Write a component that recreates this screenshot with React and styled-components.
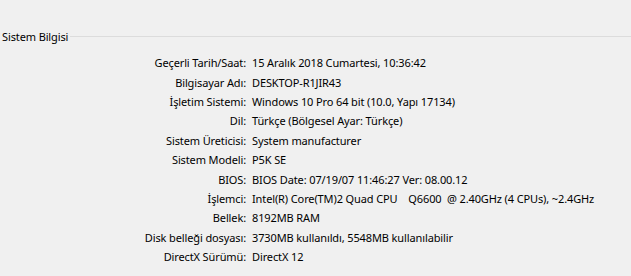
import React from 'react'
import styled, { createGlobalStyle } from 'styled-components'

const Global = createGlobalStyle`
    html, body {
        margin: 0;
        padding: 0;
        background: #f0f0f0;
    }
    body {
        font-family: "Noto Sans", "Liberation Sans", sans-serif;
        font-size: 11px;
        letter-spacing: -0.12px;
        color: #000;
    }
`

const Panel = styled.div`
    width: 631px;
    height: 276px;
    padding-top: 28px;
    box-sizing: border-box;
    overflow: hidden;
`

const Legend = styled.div`
    display: flex;
    align-items: center;
    height: 16px;
    padding-left: 2px;
    gap: 2px;

    span {
        white-space: nowrap;
    }

    &::after {
        content: '';
        flex: 1;
        height: 1px;
        background: #dcdcdc;
    }
`

const Table = styled.div`
    display: grid;
    grid-template-columns: 246px 1fr;
    column-gap: 6px;
    grid-auto-rows: 19.4px;
    margin-top: 9px;
    align-items: center;
`

const Label = styled.div`
    text-align: right;
    white-space: nowrap;
`

const Value = styled.div`
    white-space: pre;
`

const rows = [
    ['Geçerli Tarih/Saat:', '15 Aralık 2018 Cumartesi, 10:36:42'],
    ['Bilgisayar Adı:', 'DESKTOP-R1JIR43'],
    ['İşletim Sistemi:', 'Windows 10 Pro 64 bit (10.0, Yapı 17134)'],
    ['Dil:', 'Türkçe (Bölgesel Ayar: Türkçe)'],
    ['Sistem Üreticisi:', 'System manufacturer'],
    ['Sistem Modeli:', 'P5K SE'],
    ['BIOS:', 'BIOS Date: 07/19/07 11:46:27 Ver: 08.00.12'],
    ['İşlemci:', 'Intel(R) Core(TM)2 Quad CPU    Q6600  @ 2.40GHz (4 CPUs), ~2.4GHz'],
    ['Bellek:', '8192MB RAM'],
    ['Disk belleği dosyası:', '3730MB kullanıldı, 5548MB kullanılabilir'],
    ['DirectX Sürümü:', 'DirectX 12'],
]

export default function App() {
    return (
        <>
            <Global />
            <Panel>
                <Legend><span>Sistem Bilgisi</span></Legend>
                <Table>
                    {rows.map(([k, v]) => (
                        <React.Fragment key={k}>
                            <Label>{k}</Label>
                            <Value>{v}</Value>
                        </React.Fragment>
                    ))}
                </Table>
            </Panel>
        </>
    )
}
